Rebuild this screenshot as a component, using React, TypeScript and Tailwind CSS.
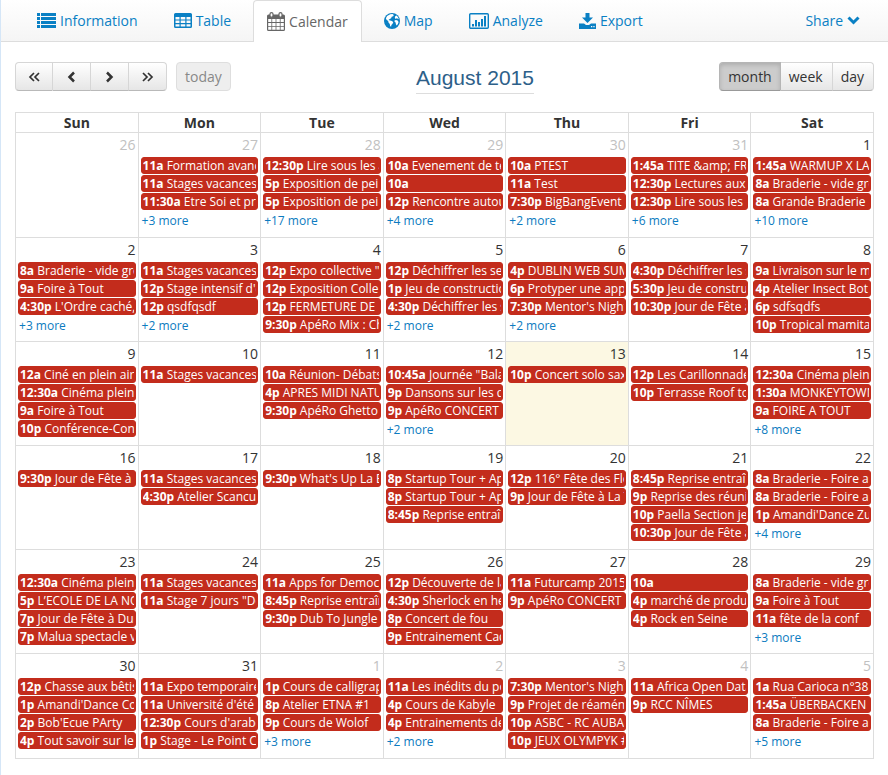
import React from "react";

type CalendarEvent = [time: string, title: string];
type Day = { n: number; other?: boolean; today?: boolean; events: CalendarEvent[]; more?: number };

const weekdays = ["Sun", "Mon", "Tue", "Wed", "Thu", "Fri", "Sat"];

const weeks: Day[][] = [
  [
    { n: 26, other: true, events: [] },
    { n: 27, other: true, events: [["11a", "Formation avanc"], ["11a", "Stages vacances"], ["11:30a", "Etre Soi et pr"]], more: 3 },
    { n: 28, other: true, events: [["12:30p", "Lire sous les a"], ["5p", "Exposition de pei"], ["5p", "Exposition de pei"]], more: 17 },
    { n: 29, other: true, events: [["10a", "Evenement de te"], ["10a", ""], ["12p", "Rencontre autou"]], more: 4 },
    { n: 30, other: true, events: [["10a", "PTEST"], ["11a", "Test"], ["7:30p", "BigBangEvent"]], more: 2 },
    { n: 31, other: true, events: [["1:45a", "TITE &amp; FR"], ["12:30p", "Lectures aux j"], ["12:30p", "Lire sous les a"]], more: 6 },
    { n: 1, events: [["1:45a", "WARMUP X LA"], ["8a", "Braderie - vide gre"], ["8a", "Grande Braderie"]], more: 10 },
  ],
  [
    { n: 2, events: [["8a", "Braderie - vide gre"], ["9a", "Foire à Tout"], ["4:30p", "L'Ordre caché,"]], more: 3 },
    { n: 3, events: [["11a", "Stages vacances"], ["12p", "Stage intensif d'é"], ["12p", "qsdfqsdf"]], more: 2 },
    { n: 4, events: [["12p", "Expo collective \""], ["12p", "Exposition Colle"], ["12p", "FERMETURE DE"], ["9:30p", "ApéRo Mix : Ch"]] },
    { n: 5, events: [["12p", "Déchiffrer les se"], ["1p", "Jeu de constructio"], ["4:30p", "Déchiffrer les s"]], more: 2 },
    { n: 6, events: [["4p", "DUBLIN WEB SUM"], ["6p", "Protyper une app"], ["7:30p", "Mentor's Night"]], more: 2 },
    { n: 7, events: [["4:30p", "Déchiffrer les s"], ["5:30p", "Jeu de constru"], ["10:30p", "Jour de Fête à"]] },
    { n: 8, events: [["9a", "Livraison sur le m"], ["4p", "Atelier Insect Bot"], ["6p", "sdfsqdfs"], ["10p", "Tropical mamita"]] },
  ],
  [
    { n: 9, events: [["12a", "Ciné en plein air"], ["12:30a", "Cinéma plein"], ["9a", "Foire à Tout"], ["10p", "Conférence-Con"]] },
    { n: 10, events: [["11a", "Stages vacances"]] },
    { n: 11, events: [["10a", "Réunion- Débats"], ["4p", "APRES MIDI NATU"], ["9:30p", "ApéRo Ghetto"]] },
    { n: 12, events: [["10:45a", "Journée \"Bala"], ["9p", "Dansons sur les q"], ["9p", "ApéRo CONCERT"]], more: 2 },
    { n: 13, today: true, events: [["10p", "Concert solo sax"]] },
    { n: 14, events: [["12p", "Les Carillonnade"], ["10p", "Terrasse Roof to"]] },
    { n: 15, events: [["12:30a", "Cinéma plein"], ["1:30a", "MONKEYTOWN"], ["9a", "FOIRE A TOUT"]], more: 8 },
  ],
  [
    { n: 16, events: [["9:30p", "Jour de Fête à"]] },
    { n: 17, events: [["11a", "Stages vacances"], ["4:30p", "Atelier Scancu"]] },
    { n: 18, events: [["9:30p", "What's Up La B"]] },
    { n: 19, events: [["8p", "Startup Tour + Ap"], ["8p", "Startup Tour + Ap"], ["8:45p", "Reprise entraîn"]] },
    { n: 20, events: [["12p", "116° Fête des Fle"], ["9p", "Jour de Fête à La T"]] },
    { n: 21, events: [["8:45p", "Reprise entraîn"], ["9p", "Reprise des réuni"], ["10p", "Paella Section je"], ["10:30p", "Jour de Fête à"]] },
    { n: 22, events: [["8a", "Braderie - Foire a"], ["8a", "Braderie - Foire a"], ["1p", "Amandi'Dance Zu"]], more: 4 },
  ],
  [
    { n: 23, events: [["12:30a", "Cinéma plein"], ["5p", "L’ECOLE DE LA NO"], ["7p", "Jour de Fête à Dun"], ["7p", "Malua spectacle v"]] },
    { n: 24, events: [["11a", "Stages vacances"], ["11a", "Stage 7 jours \"De"]] },
    { n: 25, events: [["11a", "Apps for Democ"], ["8:45p", "Reprise entraîn"], ["9:30p", "Dub To Jungle"]] },
    { n: 26, events: [["12p", "Découverte de la"], ["4:30p", "Sherlock en he"], ["8p", "Concert de fou"], ["9p", "Entrainement Cad"]] },
    { n: 27, events: [["11a", "Futurcamp 2015"], ["9p", "ApéRo CONCERT"]] },
    { n: 28, events: [["10a", ""], ["4p", "marché de produ"], ["4p", "Rock en Seine"]] },
    { n: 29, events: [["8a", "Braderie - vide gre"], ["9a", "Foire à Tout"], ["11a", "fête de la conf"]], more: 3 },
  ],
  [
    { n: 30, events: [["12p", "Chasse aux bêtis"], ["1p", "Amandi'Dance Co"], ["2p", "Bob'Ecue PArty"], ["4p", "Tout savoir sur le"]] },
    { n: 31, events: [["11a", "Expo temporaire"], ["11a", "Université d'été"], ["12:30p", "Cours d'arabe"], ["1p", "Stage - Le Point C"]] },
    { n: 1, other: true, events: [["1p", "Cours de calligrap"], ["8p", "Atelier ETNA #1"], ["9p", "Cours de Wolof"]], more: 3 },
    { n: 2, other: true, events: [["11a", "Les inédits du po"], ["4p", "Cours de Kabyle"], ["4p", "Entrainements de"]], more: 2 },
    { n: 3, other: true, events: [["7:30p", "Mentor's Night"], ["9p", "Projet de réamén"], ["10p", "ASBC - RC AUBAG"], ["10p", "JEUX OLYMPYK #"]] },
    { n: 4, other: true, events: [["11a", "Africa Open Data"], ["9p", "RCC NÎMES"]] },
    { n: 5, other: true, events: [["1a", "Rua Carioca n°38"], ["1:45a", "ÜBERBACKEN"], ["8a", "Braderie - Foire a"]], more: 5 },
  ],
];

const ListIcon = () => (
  <svg width="19" height="15" viewBox="0 0 19 15" fill="currentColor" aria-hidden="true">
    {[0, 4, 8, 12].map((y) => (
      <g key={y}>
        <rect x="0" y={y} width="3" height="3" />
        <rect x="4" y={y} width="15" height="3" />
      </g>
    ))}
  </svg>
);

const TableIcon = () => (
  <svg width="18" height="15" viewBox="0 0 18 15" aria-hidden="true">
    <path
      fill="currentColor"
      fillRule="evenodd"
      d="M1.500 0h15A1.500 1.500 0 0 1 18 1.500v12A1.500 1.500 0 0 1 16.500 15h-15A1.500 1.500 0 0 1 0 13.500v-12A1.500 1.500 0 0 1 1.500 0zM1.500 4v2.500h4V4zM6.700 4v2.500h4.600V4zM12.500 4v2.500h4V4zM1.500 7.600V10h4V7.600zM6.700 7.600V10h4.600V7.600zM12.500 7.600V10h4V7.600zM1.500 11.200v2.300h4v-2.300zM6.700 11.200v2.300h4.600v-2.300zM12.500 11.200v2.300h4v-2.300z"
    />
  </svg>
);

const CalendarIcon = () => (
  <svg width="18" height="19" viewBox="0 0 18 19" aria-hidden="true">
    <path
      fill="currentColor"
      fillRule="evenodd"
      d="M1.500 2.500h15A1.500 1.500 0 0 1 18 4v13.500a1.500 1.500 0 0 1-1.500 1.500h-15A1.500 1.500 0 0 1 0 17.500V4A1.500 1.500 0 0 1 1.500 2.500zM1.200 7v3h3.200V7zM5.200 7v3h3.400V7zM9.400 7v3h3.400V7zM13.600 7v3h3.200V7zM1.200 10.900v3h3.200v-3zM5.200 10.900v3h3.400v-3zM9.400 10.900v3h3.400v-3zM13.600 10.900v3h3.200v-3zM1.200 14.800v3h3.200v-3zM5.200 14.800v3h3.400v-3zM9.400 14.800v3h3.400v-3zM13.600 14.800v3h3.200v-3z"
    />
    <rect x="3" y="0.600" width="3" height="4.600" rx="1.500" fill="#fff" stroke="currentColor" strokeWidth="1.200" />
    <rect x="12" y="0.600" width="3" height="4.600" rx="1.500" fill="#fff" stroke="currentColor" strokeWidth="1.200" />
  </svg>
);

const GlobeIcon = () => (
  <svg width="16" height="16" viewBox="0 0 16 16" aria-hidden="true">
    <circle cx="8" cy="8" r="8" fill="currentColor" />
    <path
      fill="#fff"
      d="M6.200 1.300 8.500 1l1.300.9-.6 1.300-1.500.5-.6 1.600-1.400.6-1.200 1 1.600.6 1.900.4 1.300 1.400-.9 1.700-1 1-.3 1.700-1-.7-.3-2-1.300-1.600-.3-1.500-1.700-1.200-.6-1.500 1.200-2.300zM11.200 3.200l1.300-.8 1.400 1.500 1 2.300-.9-.4-1.300-.5-1 .6-.9-1.100zM10.500 7.600l1.500-.6 1.600.6 1 1.300-.7 2.100-1.200 1.400-.8-1.200-.3-1.600-1-.8z"
    />
  </svg>
);

const ChartIcon = () => (
  <svg width="20" height="16" viewBox="0 0 20 16" fill="currentColor" aria-hidden="true">
    <rect x="0.700" y="0.700" width="18.600" height="14.600" rx="1" fill="none" stroke="currentColor" strokeWidth="1.400" />
    <rect x="3" y="11" width="2" height="2.500" />
    <rect x="6" y="7" width="2" height="6.500" />
    <rect x="9" y="9" width="2" height="4.500" />
    <rect x="12" y="6" width="2" height="7.500" />
    <rect x="15" y="3" width="2" height="10.500" />
  </svg>
);

const DownloadIcon = () => (
  <svg width="17" height="16" viewBox="0 0 17 16" fill="currentColor" aria-hidden="true">
    <path d="M6.500 0h4v4.500H14L8.500 10 3 4.500h3.500z" />
    <path
      fillRule="evenodd"
      d="M0 10.500h5l2 1.500h3l2-1.500h5V16H0zM12 13v1.300h1.300V13zM14.300 13v1.300h1.300V13z"
    />
  </svg>
);

const tabs = [
  { label: "Information", icon: <ListIcon /> },
  { label: "Table", icon: <TableIcon /> },
  { label: "Calendar", icon: <CalendarIcon />, active: true },
  { label: "Map", icon: <GlobeIcon /> },
  { label: "Analyze", icon: <ChartIcon /> },
  { label: "Export", icon: <DownloadIcon /> },
];

const arrows = [
  { label: "Previous year", d: "M6 2 2 6l4 4M11 2 7 6l4 4", w: 13, sw: 1.7 },
  { label: "Previous month", d: "M8 1.500 3.500 6 8 10.500", w: 11, sw: 2.5 },
  { label: "Next month", d: "M3 1.500 7.500 6 3 10.500", w: 11, sw: 2.5 },
  { label: "Next year", d: "M2 2l4 4-4 4M7 2l4 4-4 4", w: 13, sw: 1.7 },
];

const buttonFace =
  "h-[29px] border border-l-0 border-[#d6d6d6] border-b-[#b9b9b9] bg-linear-to-b from-white to-[#e6e6e6] first:rounded-l first:border-l last:rounded-r";

function DayCell({ day }: { day: Day }) {
  return (
    <td className={`border border-[#ddd] p-0 align-top ${day.today ? "bg-[#fcf8e3]" : ""}`}>
      <div className={`h-6 px-0.5 pt-0.5 text-right text-sm leading-5 ${day.other ? "text-[#c1c1c1]" : "text-[#333]"}`}>
        {day.n}
      </div>
      {day.events.map(([time, title], i) => (
        <a
          key={i}
          href="#"
          className="mx-0.5 mb-px block h-[17px] rounded-[3px] border border-[#c32c1c] bg-[#c32c1c] px-px text-xs leading-[15px] text-white"
        >
          <span className="block overflow-hidden whitespace-nowrap">
            <b className="font-bold">{time}</b> {title}
          </span>
        </a>
      ))}
      {day.more && (
        <button type="button" className="ml-[3px] mt-[3px] block text-xs leading-4 text-[#0c7bc0]">
          +{day.more} more
        </button>
      )}
    </td>
  );
}

export default function App() {
  return (
    <div className="min-h-screen border-l border-[#d5e6f7] bg-white font-['Open_Sans','Noto_Sans',sans-serif] text-sm text-[#333]">
      <nav className="flex h-[42px] items-stretch justify-between border-b border-[#ddd] bg-linear-to-b from-white to-[#f5f5f5] pl-[22px] pr-7">
        <div className="flex gap-2">
          {tabs.map((t) => (
            <a
              key={t.label}
              href="#"
              aria-current={t.active ? "page" : undefined}
              className={
                t.active
                  ? "-mb-px flex items-center gap-1 rounded-t border border-b-0 border-[#ddd] bg-white px-[13px] text-[#666]"
                  : "flex items-center gap-1 px-3.5 text-[#0a80c4]"
              }
            >
              {t.icon}
              {t.label}
            </a>
          ))}
        </div>
        <button type="button" className="flex items-center gap-1 text-[#0a80c4]">
          Share
          <svg width="13" height="9" viewBox="0 0 13 9" fill="none" stroke="currentColor" strokeWidth="3" aria-hidden="true">
            <path d="M1.500 1.500l5 5 5-5" />
          </svg>
        </button>
      </nav>

      <main className="px-3.5 pb-4">
        <header className="flex items-start justify-between pt-5">
          <div className="flex gap-[9px]">
            <div className="flex">
              {arrows.map((a) => (
                <button key={a.label} type="button" aria-label={a.label} className={`flex w-[38px] items-center justify-center ${buttonFace}`}>
                  <svg width={a.w} height="12" viewBox={`0 0 ${a.w} 12`} fill="none" stroke="#333" strokeWidth={a.sw} aria-hidden="true">
                    <path d={a.d} />
                  </svg>
                </button>
              ))}
            </div>
            <button type="button" disabled className="h-[29px] rounded border border-[#dedede] bg-[#eee] px-2 text-[#888]">
              today
            </button>
          </div>
          <h2 className="border-b border-[#ddd] font-['Liberation_Sans',Arial,sans-serif] text-[21px] leading-[31px] text-[#2d6089]">
            August 2015
          </h2>
          <div className="flex justify-end">
            <button
              type="button"
              aria-pressed="true"
              className="h-[29px] rounded-l border border-[#b5b5b5] border-b-[#999] bg-[#ccc] px-2 shadow-[inset_0_2px_4px_rgba(0,0,0,0.15)]"
            >
              month
            </button>
            <button type="button" className={`pl-2 pr-[9px] ${buttonFace}`}>
              week
            </button>
            <button type="button" className={`pl-2 pr-[9px] ${buttonFace}`}>
              day
            </button>
          </div>
        </header>

        <table className="mt-[18px] w-full table-fixed border-collapse">
          <thead>
            <tr>
              {weekdays.map((d) => (
                <th key={d} scope="col" className="h-5 border border-[#ddd] p-0 text-center text-sm leading-[19px] font-bold">
                  {d}
                </th>
              ))}
            </tr>
          </thead>
          <tbody>
            {weeks.map((week, i) => (
              <tr key={i} className="h-[104px] first:h-[105px] last:h-[105px]">
                {week.map((day) => (
                  <DayCell key={day.n} day={day} />
                ))}
              </tr>
            ))}
          </tbody>
        </table>
      </main>
    </div>
  );
}
